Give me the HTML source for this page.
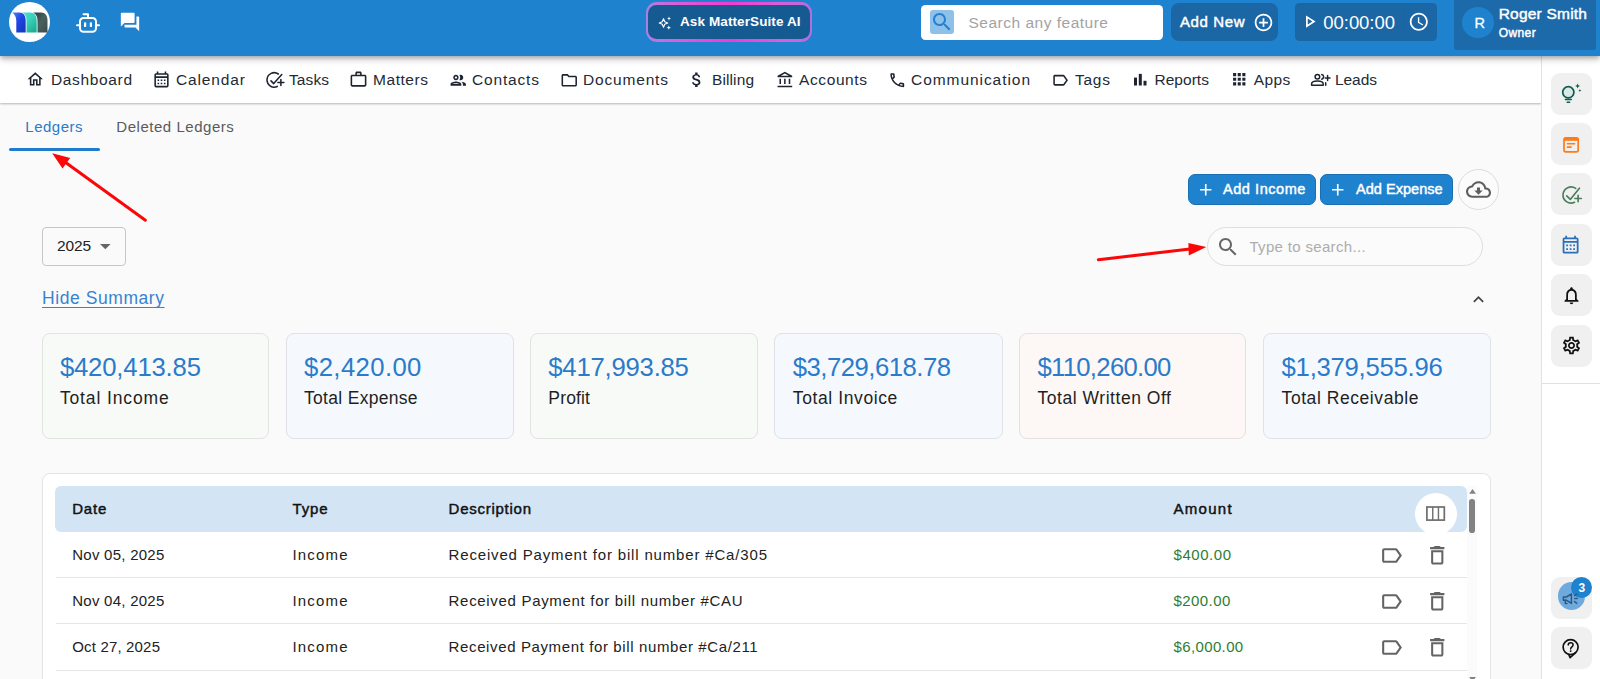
<!DOCTYPE html>
<html lang="en"><head><meta charset="utf-8"><title>Ledgers</title>
<style>
html,body{margin:0;padding:0}
body{width:1600px;height:679px;overflow:hidden;position:relative;background:#fafafa;font-family:"Liberation Sans", Arial, sans-serif;}
.t{position:absolute;white-space:pre;line-height:24px;height:24px;}
.a{position:absolute;box-sizing:border-box}
svg{position:absolute;overflow:visible}

#top{left:0;top:0;width:1600px;height:56px;background:#1f82ce;box-shadow:0 2px 4px -1px rgba(0,0,0,.2),0 4px 5px rgba(0,0,0,.14),0 1px 10px rgba(0,0,0,.12)}
#nav{left:0;top:56px;width:1541px;height:47px;background:#fff;box-shadow:0 1px 2px rgba(0,0,0,.28)}
#side{left:1541px;top:55px;width:59px;height:624px;background:#fff;border-left:1px solid #e2e2e2}
.sb{left:1550.8px;width:41.5px;height:42px;border-radius:9px;background:#f0f0f0}
.dk{background:#1b67a6}
.card{top:333px;width:227px;height:106px;border:1px solid #e1e1e1;border-radius:8px}
.btn{top:173.7px;height:31px;border-radius:7px;background:#1f82ce;border:1px solid #1a6fb3}
.rl{left:55.5px;width:1411px;height:1px;background:#e6e6e6}

</style></head><body>
<div class="a " id="nav" style=""></div>
<div class="a " id="side" style=""></div>
<div class="a " id="top" style=""></div>
<div class="a " style="left:8.8px;top:1.8px;width:41.2px;height:40.4px;border-radius:50%;background:#fff"></div>
<div class="a " style="left:645.5px;top:2px;width:166.5px;height:39.6px;border-radius:11px;background:linear-gradient(90deg,#a782e2 0%,#d95fd6 18%,#f23bd0 50%,#d95fd6 82%,#b06fe0 100%)"></div>
<div class="a " style="left:648px;top:4.5px;width:161.5px;height:34.6px;border-radius:8.5px;background:#165a92"></div>
<div class="a " style="left:921.2px;top:5px;width:241.5px;height:34.6px;border-radius:4.5px;background:#fff"></div>
<div class="a " style="left:930px;top:10px;width:24.4px;height:24.4px;border-radius:3px;background:#8ec1ea"></div>
<div class="a dk" style="left:1170.8px;top:3px;width:107.2px;height:38px;border-radius:8px"></div>
<div class="a dk" style="left:1295px;top:3px;width:142px;height:38px;border-radius:4.500px"></div>
<div class="a " style="left:1403px;top:11.2px;width:1px;height:21.3px;background:#0d7d3c"></div>
<div class="a " style="left:1454.2px;top:0;width:141.6px;height:50px;border-radius:0 0 2.500px 2.500px;background:#1c6aa9"></div>
<div class="a " style="left:1462.3px;top:6.6px;width:32.2px;height:31.6px;border-radius:50%;background:#1f82ce"></div>
<div class="a sb" style="top:73px"></div>
<div class="a sb" style="top:123.3px"></div>
<div class="a sb" style="top:173.4px"></div>
<div class="a sb" style="top:224px"></div>
<div class="a sb" style="top:274.2px"></div>
<div class="a sb" style="top:324.5px"></div>
<div class="a sb" style="top:576.6px"></div>
<div class="a sb" style="top:626.9px"></div>
<div class="a " style="left:1542px;top:383px;width:58px;height:1px;background:#e2e2e2"></div>
<div class="a " style="left:1557.8px;top:582px;width:27.6px;height:27.6px;border-radius:50%;background:#6faade"></div>
<div class="a " style="left:1570.8px;top:576.8px;width:21.4px;height:21.4px;border-radius:50%;background:#1f82ce"></div>
<div class="a " style="left:8.7px;top:148.3px;width:91px;height:3.2px;border-radius:2px;background:#1f7bcb"></div>
<div class="a " style="left:42px;top:227px;width:84px;height:39px;border:1px solid #c6c6c6;border-radius:4px"></div>
<div class="a btn" style="left:1187.8px;width:128.2px"></div>
<div class="a btn" style="left:1320px;width:132.6px"></div>
<div class="a " style="left:1457.5px;top:168.8px;width:41px;height:41px;border-radius:50%;border:1px solid #dcdcdc;background:#fbfbfb"></div>
<div class="a " style="left:1207px;top:227px;width:275.6px;height:39px;border-radius:19.5px;border:1px solid #dedede;background:#fbfbfb"></div>
<div class="a card" style="left:42px;width:227px;background:#f8faf7;border-color:#e1e4e0"></div>
<div class="a card" style="left:286px;width:228px;background:#f5f9fd;border-color:#dfe3e7"></div>
<div class="a card" style="left:530px;width:228px;background:#f8faf7;border-color:#e1e4e0"></div>
<div class="a card" style="left:774px;width:229px;background:#f5f9fd;border-color:#dfe3e7"></div>
<div class="a card" style="left:1019px;width:227px;background:#fdf7f5;border-color:#e6e0df"></div>
<div class="a card" style="left:1263px;width:228px;background:#f5f9fd;border-color:#dfe3e7"></div>
<div class="a " style="left:42px;top:473px;width:1449px;height:230px;border:1px solid #e3e3e3;border-radius:8px;background:#fff"></div>
<div class="a " style="left:55.3px;top:486px;width:1411.5px;height:46px;border-radius:6px;background:#d3e5f5"></div>
<div class="a rl" style="top:577px"></div>
<div class="a rl" style="top:623px"></div>
<div class="a rl" style="top:670px"></div>
<div class="a " style="left:1414.7px;top:492.9px;width:42.6px;height:42.6px;border-radius:50%;background:#fff"></div>
<div class="a " style="left:1467px;top:486px;width:10.2px;height:193px;background:#fbfbfb"></div>
<div class="a " style="left:1469.3px;top:498.9px;width:5.6px;height:34.2px;border-radius:2.8px;background:#828282"></div>
<span class="t" style="left:680.0px;top:9.6px;font-size:13.5px;font-weight:700;color:#fff;letter-spacing:0.101px;">Ask MatterSuite AI</span>
<span class="t" style="left:968.5px;top:10.6px;font-size:15.5px;font-weight:400;color:#a3a3a3;letter-spacing:0.501px;">Search any feature</span>
<span class="t" style="-webkit-text-stroke:0.45px #fff;left:1180.0px;top:10.2px;font-size:15px;font-weight:400;color:#fff;letter-spacing:0.604px;">Add New</span>
<span class="t" style="left:1323.3px;top:10.7px;font-size:18.5px;font-weight:400;color:#fff;letter-spacing:-0.045px;">00:00:00</span>
<span class="t" style="-webkit-text-stroke:0.3px #fff;left:1474.4px;top:10.5px;font-size:14.5px;font-weight:400;color:#fff;letter-spacing:-1.984px;">R</span>
<span class="t" style="-webkit-text-stroke:0.45px #fff;left:1498.7px;top:1.7px;font-size:15.5px;font-weight:400;color:#fff;letter-spacing:0.214px;">Roger Smith</span>
<span class="t" style="-webkit-text-stroke:0.45px #fff;left:1498.7px;top:21.0px;font-size:12px;font-weight:400;color:#fff;letter-spacing:0.414px;">Owner</span>
<span class="t" style="left:51.0px;top:67.6px;font-size:15.5px;font-weight:400;color:#232a35;letter-spacing:0.646px;">Dashboard</span>
<span class="t" style="left:176.0px;top:67.6px;font-size:15.5px;font-weight:400;color:#232a35;letter-spacing:0.871px;">Calendar</span>
<span class="t" style="left:289.0px;top:67.6px;font-size:15.5px;font-weight:400;color:#232a35;letter-spacing:0.094px;">Tasks</span>
<span class="t" style="left:373.0px;top:67.6px;font-size:15.5px;font-weight:400;color:#232a35;letter-spacing:0.552px;">Matters</span>
<span class="t" style="left:472.0px;top:67.6px;font-size:15.5px;font-weight:400;color:#232a35;letter-spacing:0.833px;">Contacts</span>
<span class="t" style="left:583.0px;top:67.6px;font-size:15.5px;font-weight:400;color:#232a35;letter-spacing:0.824px;">Documents</span>
<span class="t" style="left:712.0px;top:67.6px;font-size:15.5px;font-weight:400;color:#232a35;letter-spacing:0.107px;">Billing</span>
<span class="t" style="left:799.0px;top:67.6px;font-size:15.5px;font-weight:400;color:#232a35;letter-spacing:0.605px;">Accounts</span>
<span class="t" style="left:911.0px;top:67.6px;font-size:15.5px;font-weight:400;color:#232a35;letter-spacing:0.943px;">Communication</span>
<span class="t" style="left:1075.0px;top:67.6px;font-size:15.5px;font-weight:400;color:#232a35;letter-spacing:0.750px;">Tags</span>
<span class="t" style="left:1154.4px;top:67.6px;font-size:15.5px;font-weight:400;color:#232a35;letter-spacing:0.053px;">Reports</span>
<span class="t" style="left:1253.8px;top:67.6px;font-size:15.5px;font-weight:400;color:#232a35;letter-spacing:0.385px;">Apps</span>
<span class="t" style="left:1335.0px;top:67.6px;font-size:15.5px;font-weight:400;color:#232a35;letter-spacing:-0.059px;">Leads</span>
<span class="t" style="left:25.3px;top:115.3px;font-size:15px;font-weight:400;color:#2a7bcb;letter-spacing:0.514px;">Ledgers</span>
<span class="t" style="left:116.3px;top:115.3px;font-size:15px;font-weight:400;color:#5a5a5a;letter-spacing:0.530px;">Deleted Ledgers</span>
<span class="t" style="left:57.0px;top:233.5px;font-size:15.5px;font-weight:400;color:#222;letter-spacing:-0.161px;">2025</span>
<span class="t" style="left:42.0px;top:286.2px;font-size:17.5px;font-weight:400;color:#3783d0;letter-spacing:0.570px;text-decoration:underline;text-decoration-thickness:1px;text-underline-offset:3px;">Hide Summary</span>
<span class="t" style="-webkit-text-stroke:0.45px #fff;left:1223.0px;top:177.2px;font-size:14.5px;font-weight:400;color:#fff;letter-spacing:0.557px;">Add Income</span>
<span class="t" style="-webkit-text-stroke:0.45px #fff;left:1356.0px;top:177.2px;font-size:14.5px;font-weight:400;color:#fff;letter-spacing:0.033px;">Add Expense</span>
<span class="t" style="left:1249.4px;top:234.7px;font-size:15px;font-weight:400;color:#adadad;letter-spacing:0.332px;">Type to search...</span>
<span class="t" style="left:59.9px;top:354.6px;font-size:25.7px;font-weight:400;color:#2a7bcb;letter-spacing:-0.176px;">$420,413.85</span>
<span class="t" style="left:304.0px;top:354.6px;font-size:25.7px;font-weight:400;color:#2a7bcb;letter-spacing:0.390px;">$2,420.00</span>
<span class="t" style="left:548.3px;top:354.6px;font-size:25.7px;font-weight:400;color:#2a7bcb;letter-spacing:-0.226px;">$417,993.85</span>
<span class="t" style="left:792.8px;top:354.6px;font-size:25.7px;font-weight:400;color:#2a7bcb;letter-spacing:-0.507px;">$3,729,618.78</span>
<span class="t" style="left:1037.4px;top:354.6px;font-size:25.7px;font-weight:400;color:#2a7bcb;letter-spacing:-0.695px;">$110,260.00</span>
<span class="t" style="left:1281.6px;top:354.6px;font-size:25.7px;font-weight:400;color:#2a7bcb;letter-spacing:-0.265px;">$1,379,555.96</span>
<span class="t" style="left:59.9px;top:386.0px;font-size:17.5px;font-weight:400;color:#1f1f1f;letter-spacing:0.871px;">Total Income</span>
<span class="t" style="left:304.0px;top:386.0px;font-size:17.5px;font-weight:400;color:#1f1f1f;letter-spacing:0.305px;">Total Expense</span>
<span class="t" style="left:548.3px;top:386.0px;font-size:17.5px;font-weight:400;color:#1f1f1f;letter-spacing:0.168px;">Profit</span>
<span class="t" style="left:792.8px;top:386.0px;font-size:17.5px;font-weight:400;color:#1f1f1f;letter-spacing:0.602px;">Total Invoice</span>
<span class="t" style="left:1037.4px;top:386.0px;font-size:17.5px;font-weight:400;color:#1f1f1f;letter-spacing:0.548px;">Total Written Off</span>
<span class="t" style="left:1281.6px;top:386.0px;font-size:17.5px;font-weight:400;color:#1f1f1f;letter-spacing:0.560px;">Total Receivable</span>
<span class="t" style="-webkit-text-stroke:0.45px #111;left:72.2px;top:496.6px;font-size:15px;font-weight:400;color:#111;letter-spacing:0.804px;">Date</span>
<span class="t" style="-webkit-text-stroke:0.45px #111;left:292.5px;top:496.6px;font-size:15px;font-weight:400;color:#111;letter-spacing:0.890px;">Type</span>
<span class="t" style="-webkit-text-stroke:0.45px #111;left:448.6px;top:496.6px;font-size:15px;font-weight:400;color:#111;letter-spacing:0.737px;">Description</span>
<span class="t" style="-webkit-text-stroke:0.45px #111;left:1173.5px;top:496.6px;font-size:15px;font-weight:400;color:#111;letter-spacing:1.279px;">Amount</span>
<span class="t" style="left:72.2px;top:542.6px;font-size:15px;font-weight:400;color:#222;letter-spacing:0.261px;">Nov 05, 2025</span>
<span class="t" style="left:292.5px;top:542.6px;font-size:15px;font-weight:400;color:#222;letter-spacing:1.179px;">Income</span>
<span class="t" style="left:448.6px;top:542.6px;font-size:15px;font-weight:400;color:#222;letter-spacing:0.831px;">Received Payment for bill number #Ca/305</span>
<span class="t" style="left:1173.5px;top:542.6px;font-size:15px;font-weight:400;color:#2e7d32;letter-spacing:0.544px;">$400.00</span>
<span class="t" style="left:72.2px;top:588.8px;font-size:15px;font-weight:400;color:#222;letter-spacing:0.261px;">Nov 04, 2025</span>
<span class="t" style="left:292.5px;top:588.8px;font-size:15px;font-weight:400;color:#222;letter-spacing:1.179px;">Income</span>
<span class="t" style="left:448.6px;top:588.8px;font-size:15px;font-weight:400;color:#222;letter-spacing:0.686px;">Received Payment for bill number #CAU</span>
<span class="t" style="left:1173.5px;top:588.8px;font-size:15px;font-weight:400;color:#2e7d32;letter-spacing:0.428px;">$200.00</span>
<span class="t" style="left:72.2px;top:634.8px;font-size:15px;font-weight:400;color:#222;letter-spacing:0.172px;">Oct 27, 2025</span>
<span class="t" style="left:292.5px;top:634.8px;font-size:15px;font-weight:400;color:#222;letter-spacing:1.179px;">Income</span>
<span class="t" style="left:448.6px;top:634.8px;font-size:15px;font-weight:400;color:#222;letter-spacing:0.621px;">Received Payment for bill number #Ca/211</span>
<span class="t" style="left:1173.5px;top:634.8px;font-size:15px;font-weight:400;color:#2e7d32;letter-spacing:0.371px;">$6,000.00</span>
<span class="t" style="left:1578.5px;top:576.4px;font-size:12px;font-weight:700;color:#fff;letter-spacing:0.112px;">3</span>
<svg style="left:26.4px;top:69.9px" width="18.5" height="18.5" viewBox="0 0 24 24"><path d="M12 5.69l5 4.5V18h-2v-6H9v6H7v-7.81l5-4.5M12 3L2 12h3v8h6v-6h2v6h6v-8h3L12 3z" fill="#1d2430" /></svg>
<svg style="left:151.8px;top:70.2px" width="19" height="19" viewBox="0 0 24 24"><path d="M19 4h-1V2h-2v2H8V2H6v2H5c-1.11 0-1.99.9-1.99 2L3 20c0 1.1.89 2 2 2h14c1.1 0 2-.9 2-2V6c0-1.1-.9-2-2-2zm0 16H5V10h14v10zm0-12H5V6h14v2zM9 14H7v-2h2v2zm4 0h-2v-2h2v2zm4 0h-2v-2h2v2zm-8 4H7v-2h2v2zm4 0h-2v-2h2v2zm4 0h-2v-2h2v2z" fill="#1d2430" /></svg>
<svg style="left:349px;top:70px" width="19" height="19" viewBox="0 0 24 24"><path d="M14 6V4h-4v2h4zM4 8v11h16V8H4zm16-2c1.11 0 2 .89 2 2v11c0 1.11-.89 2-2 2H4c-1.11 0-2-.89-2-2l.01-11c0-1.11.88-2 1.99-2h4V4c0-1.11.89-2 2-2h4c1.11 0 2 .89 2 2v2h4z" fill="#1d2430" /></svg>
<svg style="left:449.2px;top:70.6px" width="18.5" height="18.5" viewBox="0 0 24 24"><path d="M9 13.75c-2.34 0-7 1.17-7 3.5V19h14v-1.750c0-2.33-4.66-3.5-7-3.5zM4.34 17c.84-.58 2.87-1.25 4.66-1.25s3.82.67 4.66 1.25H4.34zM9 12c1.93 0 3.5-1.57 3.5-3.5S10.93 5 9 5 5.5 6.57 5.5 8.5 7.07 12 9 12zm0-5c.83 0 1.5.67 1.5 1.5S9.83 10 9 10s-1.5-.67-1.5-1.5S8.17 7 9 7zm7.04 6.81c1.16.84 1.96 1.96 1.96 3.44V19h4v-1.750c0-2.02-3.5-3.17-5.96-3.44zM15 12c1.93 0 3.5-1.57 3.5-3.5S16.93 5 15 5c-.54 0-1.04.13-1.5.35.63.89 1 1.98 1 3.15s-.37 2.26-1 3.150c.46.22.96.35 1.5.35z" fill="#1d2430" /></svg>
<svg style="left:559.5px;top:70.6px" width="18.5" height="18.5" viewBox="0 0 24 24"><path d="M9.17 6l2 2H20v10H4V6h5.17M10 4H4c-1.1 0-1.99.9-1.99 2L2 18c0 1.1.9 2 2 2h16c1.1 0 2-.9 2-2V8c0-1.1-.9-2-2-2h-8l-2-2z" fill="#1d2430" /></svg>
<svg style="left:687.4px;top:70px" width="19.5" height="19.5" viewBox="0 0 24 24"><path d="M11.8 10.9c-2.27-.59-3-1.2-3-2.15 0-1.09 1.01-1.85 2.7-1.85 1.78 0 2.44.85 2.5 2.1h2.21c-.07-1.72-1.12-3.3-3.21-3.81V3h-3v2.16c-1.94.42-3.5 1.68-3.5 3.61 0 2.31 1.91 3.46 4.7 4.13 2.5.6 3 1.48 3 2.41 0 .69-.49 1.79-2.7 1.79-2.06 0-2.87-.92-2.98-2.1h-2.2c.12 2.19 1.76 3.42 3.68 3.83V21h3v-2.15c1.95-.37 3.5-1.5 3.5-3.55 0-2.84-2.43-3.81-4.7-4.4z" fill="#1d2430" /></svg>
<svg style="left:775.5px;top:70.6px" width="18.5" height="18.5" viewBox="0 0 24 24"><path d="M6.5 10h-2v7h2v-7zm6 0h-2v7h2v-7zm8.5 9H2v2h19v-2zm-2.5-9h-2v7h2v-7zm-7-6.74L16.71 6H6.29l5.21-2.74m0-2.26L2 6v2h19V6l-9.5-5z" fill="#1d2430" /></svg>
<svg style="left:887.5px;top:70.6px" width="18.5" height="18.5" viewBox="0 0 24 24"><path d="M6.54 5c.06.89.21 1.76.45 2.59l-1.2 1.2c-.41-1.2-.67-2.47-.76-3.79h1.51m9.86 12.02c.85.24 1.72.39 2.6.45v1.49c-1.32-.09-2.59-.35-3.8-.75l1.2-1.19M7.5 3H4c-.55 0-1 .45-1 1 0 9.39 7.61 17 17 17 .55 0 1-.45 1-1v-3.49c0-.55-.45-1-1-1-1.24 0-2.45-.2-3.57-.57-.1-.04-.21-.05-.31-.05-.26 0-.51.1-.71.29l-2.2 2.2c-2.83-1.45-5.15-3.76-6.59-6.59l2.2-2.2c.28-.28.36-.67.25-1.02C8.7 6.45 8.5 5.25 8.5 4c0-.55-.45-1-1-1z" fill="#1d2430" /></svg>
<svg style="left:1050.9px;top:70.6px" width="18.5" height="18.5" viewBox="0 0 24 24"><path d="M17.63 5.84C17.27 5.33 16.67 5 16 5L5 5.01C3.9 5.01 3 5.9 3 7v10c0 1.1.9 1.99 2 1.99L16 19c.67 0 1.27-.33 1.63-.84L22 12l-4.37-6.16zM16 17H5V7h11l3.55 5L16 17z" fill="#1d2430" /></svg>
<svg style="left:1230.1px;top:70.3px" width="18.5" height="18.5" viewBox="0 0 24 24"><path d="M4 8h4V4H4v4zm6 12h4v-4h-4v4zm-6 0h4v-4H4v4zm0-6h4v-4H4v4zm6 0h4v-4h-4v4zm6-10v4h4V4h-4zm-6 4h4V4h-4v4zm6 6h4v-4h-4v4zm0 6h4v-4h-4v4z" fill="#1d2430" /></svg>
<svg style="left:266px;top:71px" width="19" height="18" viewBox="266 71 19 18"><g fill="none" stroke="#1d2430" stroke-width="1.55" stroke-linecap="round" stroke-linejoin="round"><path d="M278.33 74A7.2 7.2 0 1 0 277.24 86.430"/><path d="M271 80.9L273.700 83.600 281.800 74.500"/><path d="M280.900 79.400V85.400M277.900 82.400H283.900"/></g></svg>
<svg style="left:1134px;top:73px" width="13" height="13" viewBox="1134 73 13 13"><g fill="#1d2430"><rect x="1134" y="77.600" width="3" height="7.900"/><rect x="1138.800" y="73.900" width="3" height="11.600"/><rect x="1143.500" y="80.800" width="3" height="4.700"/></g></svg>
<svg style="left:1310px;top:73px" width="21" height="14" viewBox="1310 73 21 14"><g fill="none" stroke="#1d2430" stroke-width="1.5" stroke-linecap="round" stroke-linejoin="round"><circle cx="1317.400" cy="76.800" r="2.300"/><path d="M1311.600 85.200v-1.200c0-1.800 2.700-2.900 5.800-2.900s5.800 1.100 5.800 2.900v1.200z"/><path d="M1321.700 74.500a2.400 2.400 0 0 1 0 4.700"/><path d="M1325.700 82.800v2.400"/><path d="M1327.600 75.600v4.800M1325.200 78h4.800"/></g></svg>
<svg style="left:76px;top:12.500px" width="24" height="20.500" viewBox="0 0 24 20.500"><g fill="none" stroke="#fff" stroke-width="2" stroke-linejoin="round" stroke-linecap="round"><rect x="4" y="5" width="16" height="13.800" rx="3.500"/><path d="M12 5V1.300H7.500M1 12.300h2.500M20.500 12.300H23"/></g><rect x="8" y="9.400" width="2.200" height="4.500" fill="#fff"/><rect x="13.800" y="9.400" width="2.200" height="4.500" fill="#fff"/></svg>
<svg style="left:119.2px;top:11.2px" width="22" height="22" viewBox="0 0 24 24"><path d="M21 6h-2v9H6v2c0 .55.45 1 1 1h11l4 4V7c0-.55-.45-1-1-1zm-4 6V3c0-.55-.45-1-1-1H3c-.55 0-1 .45-1 1v14l4-4h10c.55 0 1-.45 1-1z" fill="#fff" /></svg>
<svg style="left:657.500px;top:15.500px" width="14" height="14" viewBox="0 0 14 14"><path d="M5.500 2.800l1.250 3 3 1.200-3 1.250-1.250 3-1.250-3-3-1.250 3-1.200z" fill="none" stroke="#fff" stroke-width="1.100" stroke-linejoin="round"/><path d="M11 0.500l.6 1.400 1.400.6-1.400.6-.6 1.400-.6-1.400-1.400-.6 1.400-.6zM10.800 9.500l.65 1.500 1.500.65-1.500.65-.65 1.500-.65-1.500-1.500-.65 1.500-.65z" fill="#fff"/></svg>
<svg style="left:930.2px;top:10.1px" width="24" height="24" viewBox="0 0 24 24"><path d="M15.5 14h-.79l-.28-.27C15.41 12.59 16 11.11 16 9.5 16 5.91 13.09 3 9.500 3S3 5.91 3 9.500 5.91 16 9.500 16c1.61 0 3.09-.59 4.23-1.57l.27.28v.79l5 4.99L20.49 19l-4.99-5zm-6 0C7.01 14 5 11.99 5 9.500S7.01 5 9.500 5 14 7.01 14 9.500 11.99 14 9.500 14z" fill="#2580cf" /></svg>
<svg style="left:1253.25px;top:12px" width="21" height="21" viewBox="0 0 24 24"><path d="M13 7h-2v4H7v2h4v4h2v-4h4v-2h-4V7zm-1-5C6.48 2 2 6.48 2 12s4.48 10 10 10 10-4.48 10-10S17.52 2 12 2zm0 18c-4.41 0-8-3.59-8-8s3.59-8 8-8 8 3.59 8 8-3.59 8-8 8z" fill="#fff" /></svg>
<svg style="left:1299.2px;top:10.9px" width="21" height="21" viewBox="0 0 24 24"><path d="M10 8.64L15.27 12 10 15.360V8.640M8 5v14l11-7L8 5z" fill="#fff" /></svg>
<svg style="left:1407.6px;top:11.1px" width="21.6" height="21.6" viewBox="0 0 24 24"><path d="M11.99 2C6.47 2 2 6.48 2 12s4.47 10 9.99 10C17.52 22 22 17.52 22 12S17.52 2 11.99 2zM12 20c-4.42 0-8-3.58-8-8s3.58-8 8-8 8 3.58 8 8-3.58 8-8 8zm.5-13H11v6l5.250 3.150.75-1.23-4.5-2.67z" fill="#fff" /></svg>
<svg style="left:1195.5px;top:179.5px" width="19.5" height="19.5" viewBox="0 0 24 24"><path d="M19 13h-6v6h-2v-6H5v-2h6V5h2v6h6v2z" fill="#fff" /></svg>
<svg style="left:1327.8px;top:179.5px" width="19.5" height="19.5" viewBox="0 0 24 24"><path d="M19 13h-6v6h-2v-6H5v-2h6V5h2v6h6v2z" fill="#fff" /></svg>
<svg style="left:1465.5px;top:177px" width="25" height="25" viewBox="0 0 24 24"><path d="M19.35 10.04C18.67 6.59 15.64 4 12 4 9.11 4 6.6 5.64 5.350 8.04 2.34 8.36 0 10.91 0 14c0 3.31 2.69 6 6 6h13c2.76 0 5-2.24 5-5 0-2.64-2.05-4.78-4.65-4.960zM19 18H6c-2.21 0-4-1.79-4-4 0-2.05 1.53-3.76 3.56-3.97l1.07-.11.5-.95C8.08 7.14 9.94 6 12 6c2.62 0 4.88 1.86 5.39 4.43l.3 1.5 1.53.11c1.56.1 2.78 1.41 2.78 2.96 0 1.65-1.35 3-3 3zm-5.550-8h-2.9v3H8l4 4 4-4h-2.550z" fill="#5e5e5e" /></svg>
<svg style="left:1215.5px;top:234.8px" width="24" height="24" viewBox="0 0 24 24"><path d="M15.5 14h-.79l-.28-.27C15.41 12.59 16 11.11 16 9.5 16 5.91 13.09 3 9.500 3S3 5.91 3 9.500 5.91 16 9.500 16c1.61 0 3.09-.59 4.23-1.57l.27.28v.79l5 4.99L20.49 19l-4.99-5zm-6 0C7.01 14 5 11.99 5 9.500S7.01 5 9.500 5 14 7.01 14 9.500 11.99 14 9.500 14z" fill="#686868" /></svg>
<svg style="left:1467.5px;top:288.5px" width="21" height="21" viewBox="0 0 24 24"><path d="M12 8l-6 6 1.41 1.41L12 10.83l4.59 4.58L18 14z" fill="#444" /></svg>
<svg style="left:100.400px;top:244px" width="10.600" height="5.300" viewBox="0 0 10 5"><path d="M0 0h10L5 5z" fill="#666"/></svg>
<svg style="left:1378.5px;top:542.7px" width="25" height="25" viewBox="0 0 24 24"><path d="M17.63 5.84C17.27 5.33 16.67 5 16 5L5 5.01C3.9 5.01 3 5.9 3 7v10c0 1.1.9 1.99 2 1.99L16 19c.67 0 1.27-.33 1.63-.84L22 12l-4.37-6.16zM16 17H5V7h11l3.55 5L16 17z" fill="#646464" /></svg>
<svg style="left:1424.7px;top:542.7px" width="24.5" height="24.5" viewBox="0 0 24 24"><path d="M6 19c0 1.1.9 2 2 2h8c1.1 0 2-.9 2-2V7H6v12zM8 9h8v10H8V9zm7.5-5l-1-1h-5l-1 1H5v2h14V4h-3.5z" fill="#646464" /></svg>
<svg style="left:1378.5px;top:588.9px" width="25" height="25" viewBox="0 0 24 24"><path d="M17.63 5.84C17.27 5.33 16.67 5 16 5L5 5.01C3.9 5.01 3 5.9 3 7v10c0 1.1.9 1.99 2 1.99L16 19c.67 0 1.27-.33 1.63-.84L22 12l-4.37-6.16zM16 17H5V7h11l3.55 5L16 17z" fill="#646464" /></svg>
<svg style="left:1424.7px;top:588.9px" width="24.5" height="24.5" viewBox="0 0 24 24"><path d="M6 19c0 1.1.9 2 2 2h8c1.1 0 2-.9 2-2V7H6v12zM8 9h8v10H8V9zm7.5-5l-1-1h-5l-1 1H5v2h14V4h-3.5z" fill="#646464" /></svg>
<svg style="left:1378.5px;top:635.0px" width="25" height="25" viewBox="0 0 24 24"><path d="M17.63 5.84C17.27 5.33 16.67 5 16 5L5 5.01C3.9 5.01 3 5.9 3 7v10c0 1.1.9 1.99 2 1.99L16 19c.67 0 1.27-.33 1.63-.84L22 12l-4.37-6.16zM16 17H5V7h11l3.55 5L16 17z" fill="#646464" /></svg>
<svg style="left:1424.7px;top:635.0px" width="24.5" height="24.5" viewBox="0 0 24 24"><path d="M6 19c0 1.1.9 2 2 2h8c1.1 0 2-.9 2-2V7H6v12zM8 9h8v10H8V9zm7.5-5l-1-1h-5l-1 1H5v2h14V4h-3.5z" fill="#646464" /></svg>
<svg style="left:1425px;top:505px" width="21" height="17" viewBox="1425 505 21 17"><g fill="none" stroke="#6e6e6e"><rect x="1426.9" y="507" width="17.4" height="13.1" stroke-width="1.7"/><path d="M1432.75 507v13.100M1438.45 507v13.100" stroke-width="1.4"/></g></svg>
<svg style="left:1468.5px;top:489.4px" width="7.1" height="4.7" viewBox="0 0 10 7"><path d="M0 7h10L5 0z" fill="#828282"/></svg>
<svg style="left:1468.5px;top:677px" width="7.1" height="4.7" viewBox="0 0 10 7"><path d="M0 0h10L5 7z" fill="#828282"/></svg>
<svg style="left:1560px;top:83px" width="24" height="22" viewBox="1560 83 24 22"><g fill="none" stroke="#0d5c4d" stroke-width="1.700" stroke-linecap="round"><circle cx="1568.300" cy="92.300" r="5.600" fill="#dbe9e6"/><path d="M1565.400 99.500h5.900M1567.200 102.200h2.400" stroke-width="1.500"/></g><path d="M1577.600 83.600l.75 1.700 1.700.75-1.700.75-.75 1.700-.75-1.700-1.700-.75 1.700-.75zM1579.900 89l.45 1.050 1.050.45-1.050.45-.45 1.050-.45-1.050-1.050-.45 1.050-.45z" fill="#0d5c4d"/></svg>
<svg style="left:1562px;top:136px" width="18" height="18" viewBox="1562 136 18 18"><rect x="1564" y="137.800" width="14.200" height="14" rx="1.800" fill="none" stroke="#ff7a1a" stroke-width="1.700"/><rect x="1564" y="137.800" width="14.200" height="3" fill="#ff7a1a"/><path d="M1566.800 143.700h8.400M1566.800 147.100h4.800" stroke="#ff7a1a" stroke-width="1.600" fill="none"/></svg>
<svg style="left:1561px;top:185px" width="22" height="20" viewBox="1561 185 22 20"><g fill="none" stroke="#4b7d5d" stroke-width="1.650" stroke-linecap="round" stroke-linejoin="round"><path d="M1575.750 188.360A8.100 8.100 0 1 0 1574.520 202.340"/><path d="M1566.700 195.800L1570.300 199.400 1579.400 188.200"/><path d="M1578.100 195.300V201.700M1574.900 198.500H1581.300"/></g></svg>
<svg style="left:1560.3500000000001px;top:234.3px" width="21.2" height="21.2" viewBox="0 0 24 24"><path d="M19 4h-1V2h-2v2H8V2H6v2H5c-1.11 0-1.99.9-1.99 2L3 20c0 1.1.89 2 2 2h14c1.1 0 2-.9 2-2V6c0-1.1-.9-2-2-2zm0 16H5V10h14v10zm0-12H5V6h14v2zM9 14H7v-2h2v2zm4 0h-2v-2h2v2zm4 0h-2v-2h2v2zm-8 4H7v-2h2v2zm4 0h-2v-2h2v2zm4 0h-2v-2h2v2z" fill="#2a6fba" /></svg>
<svg style="left:1560.95px;top:284.8px" width="21" height="21" viewBox="0 0 24 24"><path d="M12 22c1.1 0 2-.9 2-2h-4c0 1.1.9 2 2 2zm6-6v-5c0-3.07-1.63-5.64-4.5-6.320V4c0-.83-.67-1.5-1.5-1.5s-1.5.67-1.5 1.5v.68C7.64 5.360 6 7.92 6 11v5l-2 2v1h16v-1l-2-2zm-2 1H8v-6c0-2.48 1.51-4.5 4-4.5s4 2.02 4 4.5v6z" fill="#111" /></svg>
<svg style="left:1560.95px;top:335.1px" width="21" height="21" viewBox="0 0 24 24"><path d="M19.43 12.98c.04-.32.07-.64.07-.98 0-.34-.03-.66-.07-.98l2.11-1.65c.19-.15.24-.42.12-.64l-2-3.46c-.09-.16-.26-.25-.44-.25-.06 0-.12.01-.17.03l-2.49 1c-.52-.4-1.08-.73-1.69-.98l-.38-2.65C14.46 2.18 14.25 2 14 2h-4c-.25 0-.46.18-.49.42l-.38 2.65c-.61.25-1.17.59-1.69.98l-2.49-1c-.06-.02-.12-.03-.18-.03-.17 0-.34.09-.43.25l-2 3.46c-.13.22-.07.49.12.64l2.11 1.65c-.04.32-.07.65-.07.98 0 .33.03.66.07.98l-2.11 1.65c-.19.15-.24.42-.12.64l2 3.46c.09.16.26.25.44.25.06 0 .12-.01.17-.03l2.49-1c.52.4 1.08.73 1.69.98l.38 2.65c.03.24.24.42.49.42h4c.25 0 .46-.18.49-.42l.38-2.65c.61-.25 1.17-.59 1.69-.98l2.49 1c.06.02.12.03.18.03.17 0 .34-.09.43-.25l2-3.46c.12-.22.07-.49-.12-.64l-2.11-1.65zm-1.98-1.71c.04.31.05.52.05.73 0 .21-.02.43-.05.73l-.14 1.13.89.7 1.08.84-.7 1.21-1.27-.51-1.04-.42-.9.68c-.43.32-.84.56-1.25.73l-1.06.43-.16 1.13-.2 1.35h-1.4l-.19-1.35-.16-1.13-1.06-.43c-.43-.18-.83-.41-1.23-.71l-.91-.7-1.06.43-1.27.51-.7-1.21 1.08-.84.89-.7-.14-1.13c-.03-.31-.05-.54-.05-.74s.02-.43.05-.73l.14-1.13-.89-.7-1.08-.84.7-1.21 1.27.51 1.04.42.9-.68c.43-.32.84-.56 1.25-.73l1.06-.43.16-1.13.2-1.35h1.39l.19 1.35.16 1.13 1.06.43c.43.18.83.41 1.23.71l.91.7 1.06-.43 1.27-.51.7 1.21-1.07.85-.89.7.14 1.13zM12 8c-2.21 0-4 1.79-4 4s1.79 4 4 4 4-1.79 4-4-1.79-4-4-4zm0 6c-1.1 0-2-.9-2-2s.9-2 2-2 2 .9 2 2-.9 2-2 2z" fill="#111" /></svg>
<svg style="left:1561px;top:590px" width="21" height="16" viewBox="1561 590 21 16"><g fill="none" stroke="#2c5a85" stroke-width="1.500" stroke-linejoin="round" stroke-linecap="round"><path d="M1563.400 597h3l5-3.200v9.600l-5-3.200h-3z"/><path d="M1565.300 600.300v3.300h1.600"/><path d="M1574.800 598.600h2.600M1574.500 595.600l2.200-1.400M1574.500 601.600l2.200 1.600"/></g></svg>
<svg style="left:1561px;top:637px" width="20" height="23" viewBox="1561 637 20 23"><g fill="none" stroke="#111" stroke-linecap="round" stroke-linejoin="round"><circle cx="1570.600" cy="647.100" r="7.500" stroke-width="1.700"/><path d="M1568.700 654.500l1.400 3.200 5.300-4.800" stroke-width="1.600"/><path d="M1568.200 645.100c0-1.400 1.050-2.400 2.450-2.400s2.450.95 2.450 2.200c0 1.900-2.450 1.950-2.450 4" stroke-width="1.500"/></g><circle cx="1570.650" cy="651.100" r=".95" fill="#111"/></svg>
<svg style="left:8.800px;top:1.800px" width="41.200" height="40.400" viewBox="0 0 41.200 40.400">
<defs><linearGradient id="lg1" x1="0" y1="0" x2="1" y2="1"><stop offset="0" stop-color="#5a86e8"/><stop offset=".45" stop-color="#1f45e6"/><stop offset="1" stop-color="#1238b8"/></linearGradient>
<linearGradient id="lg2" x1="0" y1="0" x2=".7" y2="1"><stop offset="0" stop-color="#3fe7d2"/><stop offset=".5" stop-color="#3bd0b8"/><stop offset="1" stop-color="#1fae97"/></linearGradient>
<linearGradient id="lg3" x1="0" y1="0" x2="1" y2="1"><stop offset="0" stop-color="#2c3a3b"/><stop offset=".5" stop-color="#4a5f5e"/><stop offset="1" stop-color="#3b4d4c"/></linearGradient></defs>
<path d="M3.200 10.400H10.500c3.800 0 6.200 3 6.200 7.500V30.500H7.300V19c0-4-1.600-6.800-4.100-8.600z" fill="url(#lg1)"/>
<path d="M13.200 10.400H21.500c3.800 0 6.200 3 6.200 7.500V30.500H17.500V18c0-3.600-1.600-6.200-4.300-7.600z" fill="url(#lg2)"/>
<path d="M24.200 10.400H32.300c3.800 0 6.200 3 6.200 7.500V30.500H28.500V18c0-3.600-1.600-6.200-4.300-7.600z" fill="url(#lg3)"/>
</svg>
<svg style="left:0;top:0" width="1600" height="679" viewBox="0 0 1600 679">
<g stroke="#fb0707" stroke-width="3" stroke-linecap="round" fill="#fb0707">
<path d="M145.400 220.200L66 162.800" fill="none"/><path d="M52.200 153.300L70.200 157.900 62.500 168.500z" stroke="none"/>
<path d="M1098.300 259.700L1190 249.100" fill="none"/><path d="M1206.300 247.100L1188.400 243 1188.800 255.600z" stroke="none"/>
</g></svg>
</body></html>
